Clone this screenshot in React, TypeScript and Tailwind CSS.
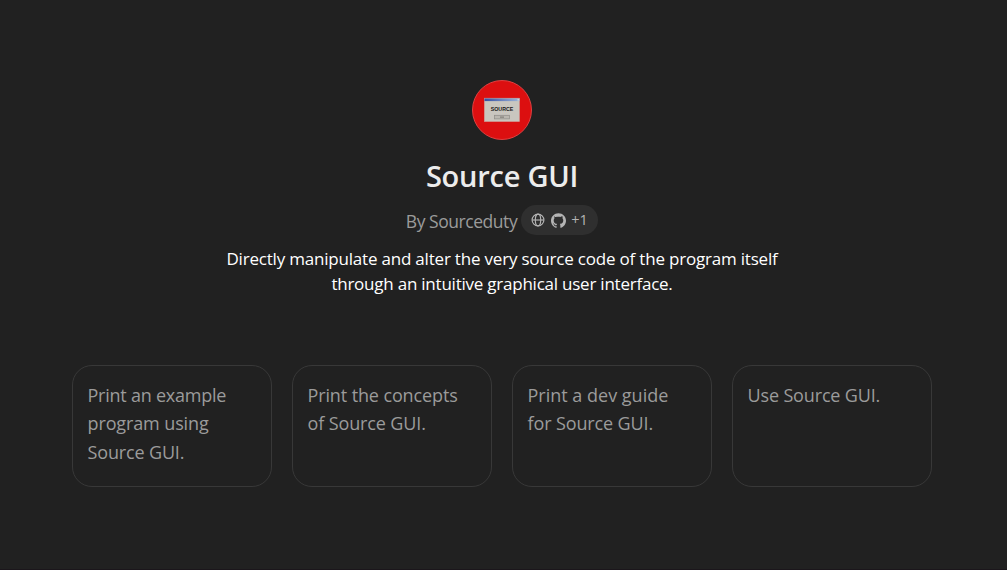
import { SiGithub } from "react-icons/si";

const starters = [
  [
    { text: "Print an example", tracking: "tracking-[-0.24px]" },
    { text: "program using", tracking: "tracking-[-0.12px]" },
    { text: "Source GUI.", tracking: "tracking-[-0.15px]" },
  ],
  [
    { text: "Print the concepts", tracking: "tracking-[-0.12px]" },
    { text: "of Source GUI.", tracking: "tracking-[-0.12px]" },
  ],
  [
    { text: "Print a dev guide", tracking: "tracking-[0px]" },
    { text: "for Source GUI.", tracking: "tracking-[-0.12px]" },
  ],
  [{ text: "Use Source GUI.", tracking: "tracking-[-0.15px]" }],
];

function Avatar() {
  return (
    <svg width="60" height="60" viewBox="0 0 60 60" className="block">
      <defs>
        <linearGradient id="titlebar" x1="0" x2="1">
          <stop offset="0" stopColor="#3450a4" />
          <stop offset="1" stopColor="#9db4d8" />
        </linearGradient>
      </defs>
      <circle cx="30" cy="30" r="29.5" fill="#dc0f10" stroke="#df4142" />
      <rect x="12.3" y="18.2" width="35.2" height="23.4" fill="#c9c6bf" stroke="#cf9a94" strokeWidth="0.6" />
      <rect x="12.5" y="18.5" width="35" height="2.6" fill="url(#titlebar)" />
      <rect x="45.5" y="19" width="1.5" height="1.5" fill="#d8d5d0" />
      <text x="30" y="31.1" textAnchor="middle" textLength="22.5" lengthAdjust="spacingAndGlyphs" fontSize="5.8" fontWeight="700" fill="#171717" fontFamily="Liberation Sans, sans-serif">SOURCE</text>
      <rect x="22.5" y="35.3" width="15" height="3.6" fill="#bab7b0" stroke="#8f8c87" strokeWidth="0.7" />
      <path d="M28 37.1h4" stroke="#77746f" strokeWidth="1" />
    </svg>
  );
}

function Globe() {
  return (
    <svg width="14" height="14" viewBox="0 0 14 14" fill="none" stroke="#b4b4b4" strokeWidth="1.15">
      <circle cx="7" cy="7" r="5.9" />
      <ellipse cx="7" cy="7" rx="2.7" ry="5.9" />
      <path d="M1.1 7h11.8" />
    </svg>
  );
}

export default function App() {
  return (
    <main className="flex h-[570px] w-[1007px] flex-col border-b border-[#1b161b] bg-[#212121] pt-20 font-['Open_Sans',sans-serif]">
      <header className="flex w-[1004px] flex-col items-center">
        <Avatar />
        <h1 className="mt-4 h-10 whitespace-nowrap text-[29px] font-semibold leading-10 tracking-[-0.25px] text-[#ececec]">Source GUI</h1>
        <div className="mt-[9px] flex h-[30px] items-center gap-1">
          <span className="whitespace-nowrap pt-[2px] text-[17.5px] leading-[26px] tracking-[-0.45px] text-[#9b9b9b]">By Sourceduty</span>
          <span className="flex h-[30px] w-[77px] items-center rounded-full bg-[#2f2f2f] pl-[10px]">
            <Globe />
            <SiGithub className="ml-[6px] size-[15px] text-[#b4b4b4]" />
            <span className="ml-[5px] text-[14.5px] font-medium text-[#b4b4b4]">+1</span>
          </span>
        </div>
        <p className="mt-[11px] whitespace-nowrap text-center text-[17px] leading-[25px] text-[#fff]">
          <span className="block tracking-[-0.2px]">Directly manipulate and alter the very source code of the program itself</span>
          <span className="block tracking-[-0.23px]">through an intuitive graphical user interface.</span>
        </p>
      </header>
      <section className="ml-[72px] mt-[69px] grid w-[860px] grid-cols-4 gap-5">
        {starters.map((lines) => (
          <button key={lines[0].text} className="flex h-[122px] flex-col items-start rounded-[20px] border border-[#383838] px-[14.5px] pt-[15px] text-[18px] leading-[28.3px] text-[#9b9b9b]">
            {lines.map(({ text, tracking }) => (
              <span key={text} className={`whitespace-nowrap ${tracking}`}>{text}</span>
            ))}
          </button>
        ))}
      </section>
    </main>
  );
}
